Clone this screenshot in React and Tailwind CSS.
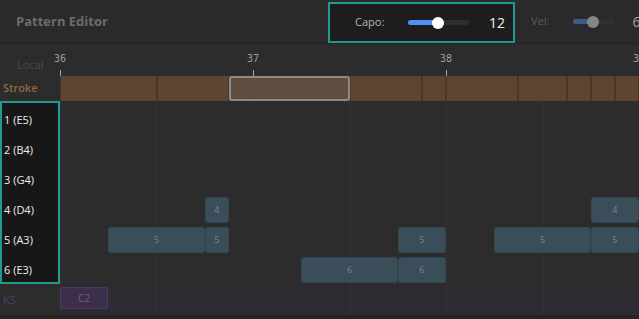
const strokeSegments = [
  { start: 0, len: 4 },
  { start: 4, len: 3 },
  { start: 7, len: 5, selected: true },
  { start: 12, len: 3 },
  { start: 15, len: 1 },
  { start: 16, len: 3 },
  { start: 19, len: 2 },
  { start: 21, len: 1 },
  { start: 22, len: 1 },
  { start: 23, len: 1 },
  { start: 24, len: 4 },
  { start: 28, len: 4 },
];

const strings = [
  { label: "1 (E5)", notes: [] },
  { label: "2 (B4)", notes: [] },
  { label: "3 (G4)", notes: [] },
  {
    label: "4 (D4)",
    notes: [
      { start: 6, len: 1, text: "4" },
      { start: 22, len: 2, text: "4" },
    ],
  },
  {
    label: "5 (A3)",
    notes: [
      { start: 2, len: 4, text: "5" },
      { start: 6, len: 1, text: "5" },
      { start: 14, len: 2, text: "5" },
      { start: 18, len: 4, text: "5" },
      { start: 22, len: 2, text: "5" },
    ],
  },
  {
    label: "6 (E3)",
    notes: [
      { start: 10, len: 4, text: "6" },
      { start: 14, len: 2, text: "6" },
    ],
  },
];

const beats = [36, 37, 38, 39];

const gridLines =
  "bg-[repeating-linear-gradient(90deg,#313131_0,#313131_1px,transparent_1px,transparent_96.5px)]";

function span(start, len) {
  return { gridColumn: `${start + 1} / span ${len}` };
}

function Lane({ children, className = "" }) {
  return (
    <div
      className={`grid grid-cols-[repeat(32,24.125px)] w-[772px] shrink-0 ${className}`}
    >
      {children}
    </div>
  );
}

function Header() {
  return (
    <div className="flex h-[44px] shrink-0 items-start border-b border-[#232323] bg-[#2a2a2c]">
      <div className="flex h-[43px] w-[328px] shrink-0 items-center pl-[16px] text-[13px] font-bold text-[#6c6c6c]">
        Pattern Editor
      </div>
      <div className="mt-[2px] flex h-[41px] w-[187px] shrink-0 items-center border-2 border-[#1d9a91] bg-[#1d1d1f] pl-[25px] pr-[8px]">
        <span className="text-[11px] text-[#b4b4b4]">Capo:</span>
        <div className="ml-[24px] flex h-[5px] w-[61px] items-center rounded-full bg-[#2e2e31]">
          <div className="h-[5px] w-[30px] rounded-full bg-[#4f8ff5]" />
          <div className="-ml-[6px] h-[12px] w-[12px] rounded-full bg-white" />
        </div>
        <span className="ml-auto text-[14px] font-medium text-[#f2f2f2]">12</span>
      </div>
      <div className="flex h-[43px] shrink-0 items-center pl-[16px]">
        <span className="text-[11px] text-[#5a5a5a]">Vel:</span>
        <div className="ml-[24px] flex h-[5px] w-[42px] items-center rounded-full bg-[#303033]">
          <div className="h-[5px] w-[20px] rounded-full bg-[#3f5a86]" />
          <div className="-ml-[6px] h-[12px] w-[12px] rounded-full bg-[#858585]" />
        </div>
        <span className="ml-[17px] text-[14px] text-[#a0a0a0]">6</span>
      </div>
    </div>
  );
}

function Ruler() {
  return (
    <div className="flex h-[32px] shrink-0">
      <div className="flex w-[60px] shrink-0 items-end pb-[3px] pl-[17px] text-[11px] text-[#4b4b4b]">
        Local
      </div>
      <div className="flex">
        {beats.map((beat) => (
          <div key={beat} className="w-[193px] shrink-0">
            <div className="-ml-[12px] flex w-[24px] flex-col items-center pt-[9px]">
              <span className="font-['DejaVu_Sans_Mono',monospace] text-[10px] leading-[12px] text-[#9c9c9c]">
                {beat}
              </span>
              <div className="mt-[5px] h-[6px] w-px bg-[#a8a8a8]" />
            </div>
          </div>
        ))}
      </div>
    </div>
  );
}

function StrokeRow() {
  return (
    <div className="flex h-[25px] shrink-0">
      <div className="flex w-[60px] shrink-0 items-center pl-[3px] text-[11px] font-semibold text-[#8d6b3f]">
        Stroke
      </div>
      <Lane className="h-[25px] bg-[#5b4430]">
        {strokeSegments.map((seg) =>
          seg.selected ? (
            <div
              key={seg.start}
              style={span(seg.start, seg.len)}
              className="rounded-[3px] border-2 border-[#8c8a88] bg-[#5f4e3f]"
            />
          ) : (
            <div
              key={seg.start}
              style={span(seg.start, seg.len)}
              className="border-x border-[#4a3727] bg-[#5d4531]"
            />
          ),
        )}
      </Lane>
    </div>
  );
}

function Strings() {
  return (
    <div className="flex shrink-0 items-start">
      <div className="flex h-[183px] w-[60px] shrink-0 flex-col overflow-hidden border-2 border-[#1d9a91] bg-[#171717] pt-[2px]">
        {strings.map((s) => (
          <div
            key={s.label}
            className="flex h-[30px] shrink-0 items-center pl-[2px] text-[11px] text-[#ececec]"
          >
            {s.label}
          </div>
        ))}
      </div>
      <div className={`flex flex-col pt-[4px] ${gridLines}`}>
        {strings.map((s) => (
          <Lane key={s.label} className="h-[30px] py-[2px]">
            {s.notes.map((n) => (
              <div
                key={n.start}
                style={span(n.start, n.len)}
                className="flex items-center justify-center rounded-[3px] border border-[#34474f] bg-[#3a4e59] text-[9px] text-[#6d8796]"
              >
                {n.text}
              </div>
            ))}
          </Lane>
        ))}
      </div>
    </div>
  );
}

function KeySwitchRow() {
  return (
    <div className="flex h-[30px] shrink-0">
      <div className="flex w-[60px] shrink-0 items-center pl-[3px] text-[11px] text-[#4a3f68]">
        KS
      </div>
      <Lane className={`h-[30px] bg-[#2d2b31] pt-[2px] pb-[6px] ${gridLines}`}>
        <div
          style={span(0, 2)}
          className="flex items-center justify-center rounded-[2px] border border-[#4a3a5c] bg-[#3b2f4b] text-[10px] text-[#6f6088]"
        >
          C2
        </div>
      </Lane>
    </div>
  );
}

export default function App() {
  return (
    <div className="flex h-[319px] w-[639px] flex-col overflow-hidden bg-[#2c2c2c] font-['Open_Sans','Noto_Sans',sans-serif]">
      <Header />
      <Ruler />
      <StrokeRow />
      <Strings />
      <KeySwitchRow />
      <div className="flex-1 bg-[#242424]" />
    </div>
  );
}
